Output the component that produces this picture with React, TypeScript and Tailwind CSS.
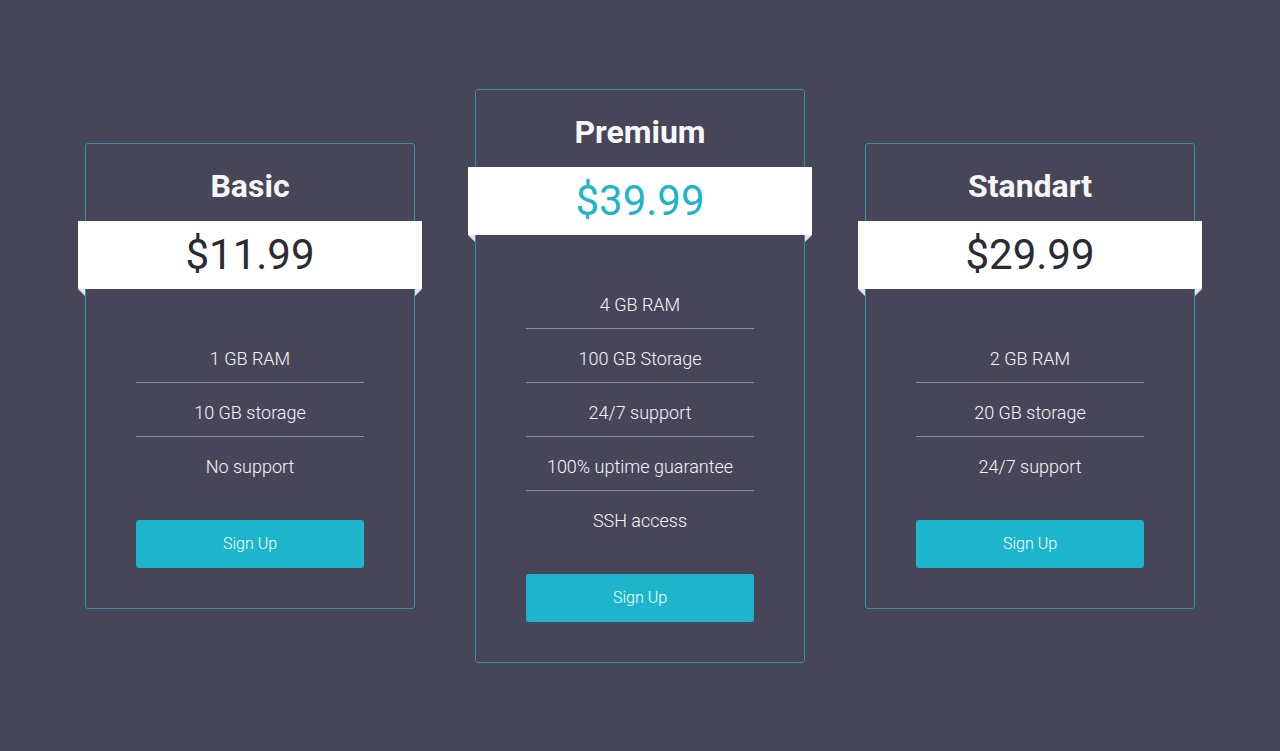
const PLANS = [
  {
    name: "Basic",
    price: "$11.99",
    features: ["1 GB RAM", "10 GB storage", "No support"],
    featured: false,
  },
  {
    name: "Premium",
    price: "$39.99",
    features: ["4 GB RAM", "100 GB Storage", "24/7 support", "100% uptime guarantee", "SSH access"],
    featured: true,
  },
  {
    name: "Standart",
    price: "$29.99",
    features: ["2 GB RAM", "20 GB storage", "24/7 support"],
    featured: false,
  },
];

type Plan = (typeof PLANS)[number];

function PlanCard({ plan }: { plan: Plan }) {
  return (
    <div className="flex w-[330px] flex-col rounded-[3px] border border-[#3b8fab] pt-[24px] pb-[40px]">
      <h2 className="text-center text-[32px] leading-[36px] font-bold text-[#f7f7f9]">{plan.name}</h2>

      <div className="relative -mx-[8px] mt-[17px] flex h-[68px] items-center justify-center bg-white">
        <span
          className={`text-[42px] leading-none font-normal ${
            plan.featured ? "text-[#1fb4ca]" : "text-[#2b2b33]"
          }`}
        >
          {plan.price}
        </span>
        <div className="absolute top-full left-0 h-0 w-0 border-t-[7px] border-l-[7px] border-t-[#e4e4e4] border-l-transparent" />
        <div className="absolute top-full right-0 h-0 w-0 border-t-[7px] border-r-[7px] border-t-[#e4e4e4] border-r-transparent" />
      </div>

      <ul className="mx-[50px] mt-[40px]">
        {plan.features.map((f, i) => (
          <li
            key={f}
            className={`pt-[18px] pb-[11px] text-center text-[18px] leading-[24px] font-light text-[#f7f7f9] ${
              i < plan.features.length - 1 ? "border-b border-[#8c8b99]" : ""
            }`}
          >
            {f}
          </li>
        ))}
      </ul>

      <button className="mx-[50px] mt-[30px] h-[48px] rounded-[3px] bg-[#1db5cc] text-[16px] font-light text-white">
        Sign Up
      </button>
    </div>
  );
}

export default function App() {
  return (
    <div
      className="flex min-h-screen items-center justify-center gap-[60px] bg-[#474659]"
      style={{ fontFamily: "Roboto, 'Liberation Sans', sans-serif" }}
    >
      {PLANS.map((p) => (
        <PlanCard key={p.name} plan={p} />
      ))}
    </div>
  );
}
